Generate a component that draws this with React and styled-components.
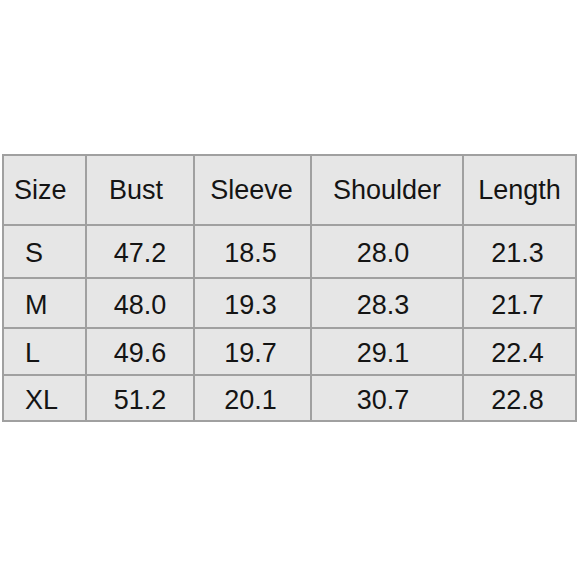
import React from "react";
import styled, { createGlobalStyle } from "styled-components";

const Global = createGlobalStyle`
  html, body { margin: 0; padding: 0; background: #ffffff; }
  body { font-family: "Liberation Sans", Arial, sans-serif; }
`;

const Page = styled.div`
  width: 580px;
  height: 580px;
  box-sizing: border-box;
  padding: 154px 0 0 2px;
  background: #ffffff;
`;

const Grid = styled.div`
  display: grid;
  grid-template-columns: 81px 106px 115px 150px 111px;
  grid-template-rows: 68px 51px 48px 45px 44px;
  gap: 2px;
  padding: 2px;
  width: max-content;
  background: #a0a0a0;
`;

const Cell = styled.div`
  background: #e6e6e6;
  color: #141414;
  font-size: 27px;
  line-height: 1;
  display: flex;
  align-items: center;
  justify-content: ${(p) => (p.$align === "left" ? "flex-start" : "center")};
  padding-left: ${(p) => p.$pad || 0}px;
  padding-right: ${(p) => p.$shift || 0}px;
  padding-top: ${(p) => p.$top || 0}px;
  box-sizing: border-box;
`;

const headers = ["Size", "Bust", "Sleeve", "Shoulder", "Length"];
const headerShift = [0, 8, 2, 0, 0];
const valueShift = [0, 0, 4, 8, 4];
const rows = [
  ["S", "47.2", "18.5", "28.0", "21.3"],
  ["M", "48.0", "19.3", "28.3", "21.7"],
  ["L", "49.6", "19.7", "29.1", "22.4"],
  ["XL", "51.2", "20.1", "30.7", "22.8"],
];

export default function App() {
  return (
    <>
      <Global />
      <Page>
        <Grid>
          {headers.map((h, i) =>
            i === 0 ? (
              <Cell key={h} $align="left" $pad={10}>{h}</Cell>
            ) : (
              <Cell key={h} $shift={headerShift[i]}>{h}</Cell>
            )
          )}
          {rows.map((r) =>
            r.map((v, i) =>
              i === 0 ? (
                <Cell key={v} $align="left" $pad={21} $top={4}>{v}</Cell>
              ) : (
                <Cell key={r[0] + i} $top={4} $shift={valueShift[i]}>{v}</Cell>
              )
            )
          )}
        </Grid>
      </Page>
    </>
  );
}
